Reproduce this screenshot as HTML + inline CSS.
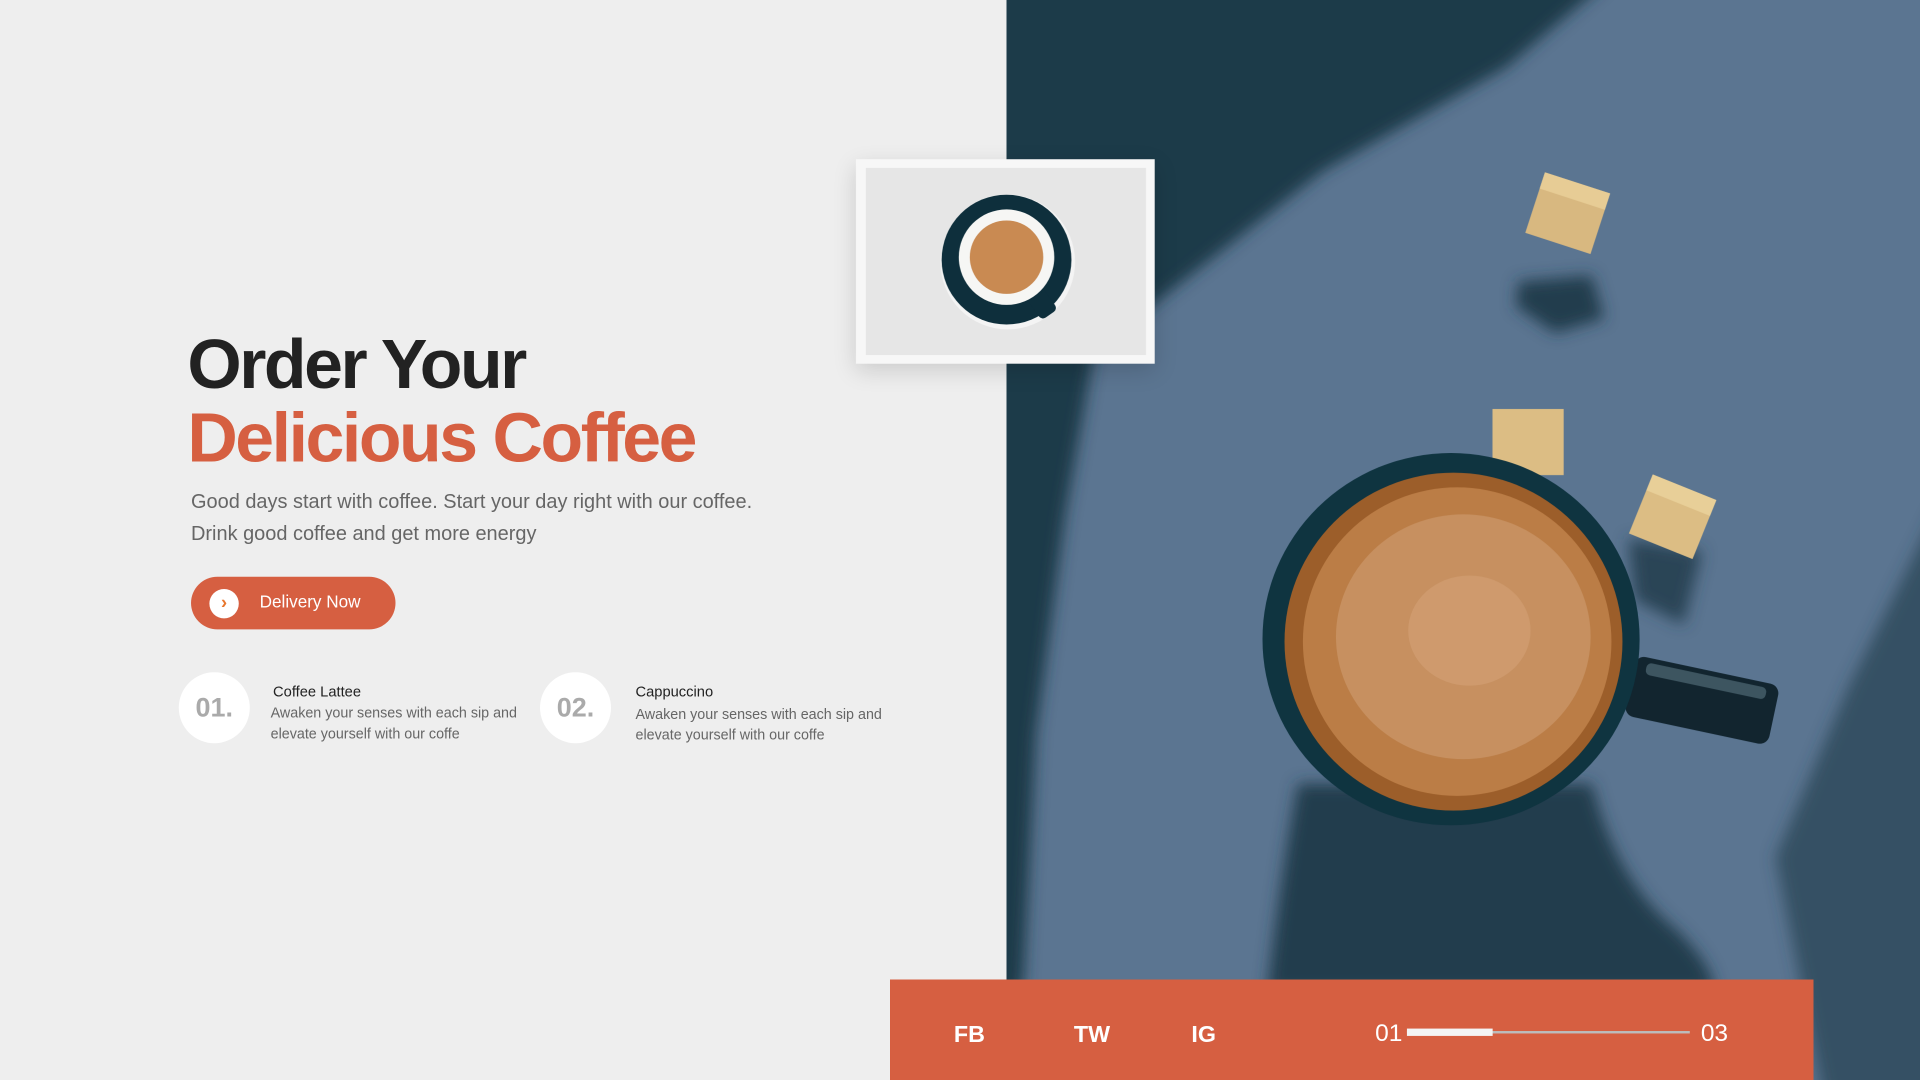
<!DOCTYPE html>
<html><head><meta charset="utf-8"><style>
html,body{margin:0;padding:0;width:1920px;height:1080px;overflow:hidden;background:#eeeeee}
#w{position:absolute;left:0;top:0;width:1568px;height:882px;transform:scale(1.22449);transform-origin:0 0;font-family:"Liberation Sans",sans-serif}
.a{position:absolute;white-space:nowrap}
h1{margin:0;position:absolute;left:153px;font-weight:700;font-size:57px;letter-spacing:-2px;line-height:1}
.c{position:absolute;width:58px;height:58px;border-radius:50%;background:#fff;color:#aaa;font-weight:700;font-size:22px;text-align:center;line-height:58px}
.t{font-size:12px;color:#222}
.d{font-size:11.7px;color:#666;line-height:17px}
.f{font-size:19px;font-weight:700;color:#fff}
</style></head><body><div id="w">
<svg class="a" style="left:822px;top:0" width="746" height="882" viewBox="822 0 746 882">
<defs><filter id="b" x="-20%" y="-20%" width="140%" height="140%"><feGaussianBlur stdDeviation="6"/></filter></defs>
<rect x="822" y="0" width="746" height="882" fill="#5b7591"/>
<g filter="url(#b)">
<polygon points="800,-20 1318,-20 1230,55 1080,140 940,250 893,290 870,420 846,600 836,800 800,900" fill="#1f3a4a"/>
<polygon points="1600,380 1600,900 1490,900 1450,700 1510,560" fill="#2d4859" opacity="0.8"/>
<path d="M1060,640 L1300,640 Q1320,720 1370,760 Q1400,790 1400,810 L1035,810 Q1045,720 1060,640Z" fill="#223d4e"/>
<polygon points="1240,230 1300,225 1310,260 1270,272 1238,250" fill="#223d4e"/>
<polygon points="1330,440 1390,450 1375,510 1335,490" fill="#2a4556"/>
</g>
<g transform="rotate(18 1280 175)"><rect x="1252" y="148" width="56" height="52" fill="#d8b880"/><rect x="1252" y="148" width="56" height="14" fill="#e7cc95"/></g>
<rect x="1219" y="334" width="58" height="54" fill="#dcbd84"/>
<g transform="rotate(22 1366 422)"><rect x="1338" y="396" width="56" height="52" fill="#dcbd84"/><rect x="1338" y="396" width="56" height="14" fill="#e8cf98"/></g>
<g transform="rotate(12 1395 572)"><rect x="1330" y="548" width="120" height="50" rx="8" fill="#12252f"/><rect x="1340" y="552" width="100" height="10" rx="4" fill="#3d5560"/></g>
<ellipse cx="1185" cy="522" rx="154" ry="152" fill="#0f3440"/>
<ellipse cx="1187" cy="524" rx="138" ry="138" fill="#9c5e2a"/>
<ellipse cx="1190" cy="524" rx="126" ry="126" fill="#bb7d46"/>
<ellipse cx="1195" cy="520" rx="104" ry="100" fill="#c79060"/>
<ellipse cx="1200" cy="515" rx="50" ry="45" fill="#d3a277" opacity="0.6"/>
</svg>
<div class="a" style="left:699px;top:130px;width:244px;height:167px;background:#f7f7f7;box-shadow:0 6px 18px rgba(0,0,0,0.15)"></div>
<svg class="a" style="left:707px;top:137px" width="229" height="153" viewBox="0 0 229 153">
<rect width="229" height="153" fill="#e6e6e6"/>
<circle cx="116" cy="77" r="55" fill="#f4f4f4"/>
<circle cx="115" cy="75" r="53" fill="#0e2f3c"/>
<rect x="136" y="100" width="16" height="22" rx="4" fill="#0e2f3c" transform="rotate(-35 144 111)"/>
<circle cx="115" cy="73" r="39" fill="#f6f6f4"/>
<circle cx="115" cy="73" r="30" fill="#c98a52"/>
</svg>
<h1 style="top:270px;color:#222">Order Your</h1>
<h1 style="top:330px;color:#d65f41">Delicious Coffee</h1>
<div class="a" style="left:156px;top:397px;font-size:16.3px;color:#666;line-height:26px">Good days start with coffee. Start your day right with our coffee.<br>Drink good coffee and get more energy</div>
<div class="a" style="left:156px;top:471px;width:167px;height:43px;border-radius:22px;background:#d65f41">
<div class="a" style="left:15px;top:10px;width:24px;height:24px;border-radius:50%;background:#fff;color:#e8772e;font-weight:700;font-size:15px;text-align:center;line-height:23px">›</div>
<div class="a" style="left:56px;top:12px;color:#fff;font-size:14px">Delivery Now</div></div>
<div class="c" style="left:146px;top:549px">01.</div>
<div class="a t" style="left:223px;top:558px">Coffee Lattee</div>
<div class="a d" style="left:221px;top:574px">Awaken your senses with each sip and<br>elevate yourself with our coffe</div>
<div class="c" style="left:441px;top:549px">02.</div>
<div class="a t" style="left:519px;top:558px">Cappuccino</div>
<div class="a d" style="left:519px;top:575px">Awaken your senses with each sip and<br>elevate yourself with our coffe</div>
<div class="a" style="left:727px;top:800px;width:754px;height:82px;background:#d65f41">
<div class="a f" style="left:52px;top:35px">FB</div>
<div class="a f" style="left:150px;top:35px">TW</div>
<div class="a f" style="left:246px;top:35px">IG</div>
<div class="a" style="left:396px;top:33px;color:#fff;font-size:20px">01</div>
<div class="a" style="left:422px;top:42px;width:231px;height:2px;background:#bcbcbc"></div>
<div class="a" style="left:422px;top:40px;width:70px;height:6px;background:#f4f4f4"></div>
<div class="a" style="left:662px;top:33px;color:#fff;font-size:20px">03</div>
</div>
</div></body></html>
